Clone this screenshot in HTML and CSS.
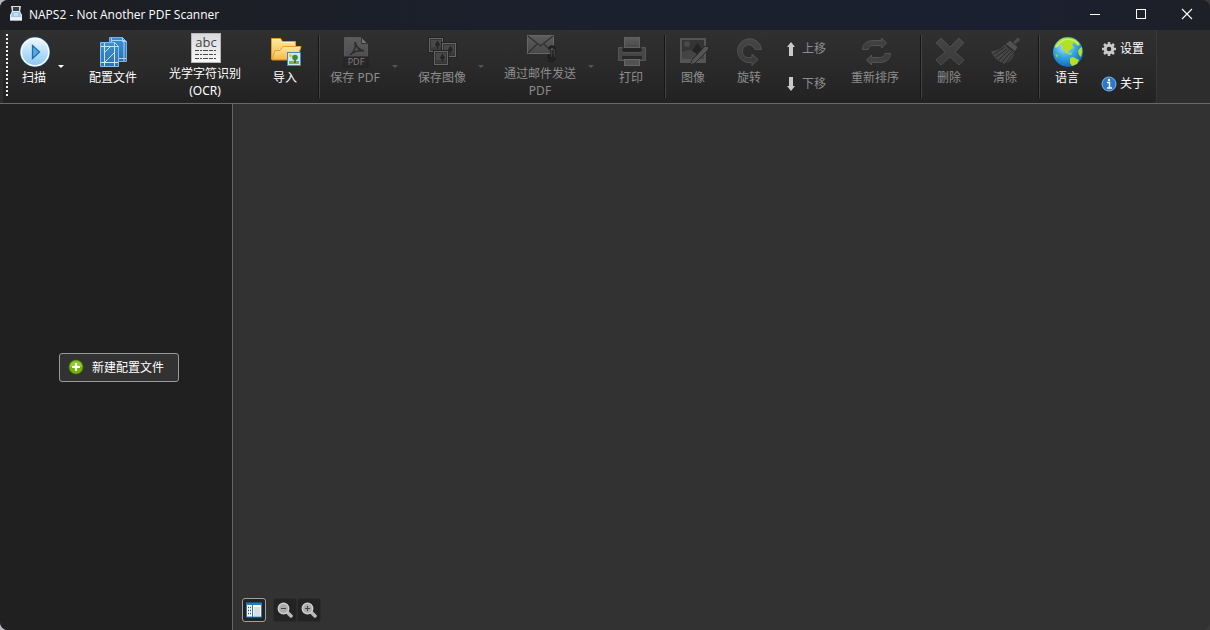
FILE: index.html
```html
<!DOCTYPE html>
<html lang="zh-CN">
<head>
<meta charset="utf-8">
<title>NAPS2 - Not Another PDF Scanner</title>
<link rel="stylesheet" href="styles.css">
</head>
<body>
<svg class="defs" width="0" height="0" aria-hidden="true">
  <defs>
    <linearGradient id="gray" x1="0" y1="0" x2="0" y2="1"><stop offset="0" stop-color="#5d5d5d"/><stop offset="1" stop-color="#484848"/></linearGradient>
    <linearGradient id="dim" x1="0" y1="0" x2="0" y2="1"><stop offset="0" stop-color="#454545"/><stop offset="1" stop-color="#3a3a3a"/></linearGradient>
    <linearGradient id="sky" x1="0" y1="0" x2="0" y2="1"><stop offset="0" stop-color="#eaf6fe"/><stop offset="1" stop-color="#8cc8f2"/></linearGradient>
    <linearGradient id="blue" x1="0" y1="0" x2="0" y2="1"><stop offset="0" stop-color="#3f8fd4"/><stop offset="1" stop-color="#2a72b8"/></linearGradient>
    <linearGradient id="folder" x1="0" y1="0" x2="0" y2="1"><stop offset="0" stop-color="#ffe9a0"/><stop offset="1" stop-color="#f5b947"/></linearGradient>
    <radialGradient id="sea" cx=".4" cy=".3" r=".75"><stop offset="0" stop-color="#b5ecfb"/><stop offset=".5" stop-color="#35a5e2"/><stop offset="1" stop-color="#0b62b4"/></radialGradient>
    <linearGradient id="paper" x1="0" y1="0" x2="0" y2="1"><stop offset="0" stop-color="#d9d9dc"/><stop offset="1" stop-color="#f8f8f8"/></linearGradient>
  </defs>
</svg>
<div class="window">
  <header class="titlebar">
    <svg class="app-icon" width="16" height="16" viewBox="0 0 16 16"><path d="M3 0h10l-1 6H4z" fill="#d9dde0"/><path d="M5 1h6v4H5z" fill="#3b3f46"/><path d="M4 5h8l2 4v5H2V9z" fill="#e4eaf0"/><path d="M4 6h8l1 5H3z" fill="#9cc8f2"/><path d="M6 7h4v3H6z" fill="#c2e0fa"/><path d="M2 12h12v3H2z" fill="#f1f1f1"/><path d="M2 14h12v1H2z" fill="#a9adb2"/></svg>
    <h1 class="title">NAPS2 - Not Another PDF Scanner</h1>
    <div class="captions">
      <button class="caption" aria-label="最小化"><svg width="12" height="12"><path d="M1 6.500h10" stroke="#fff"/></svg></button>
      <button class="caption" aria-label="最大化"><svg width="12" height="12"><rect x="1.500" y="1.500" width="9" height="9" fill="none" stroke="#fff"/></svg></button>
      <button class="caption" aria-label="关闭"><svg width="12" height="12"><path d="M1 1l10 10M11 1L1 11" stroke="#fff" stroke-width="1.100"/></svg></button>
    </div>
  </header>

  <nav class="toolbar" aria-label="工具栏">
    <div class="strip">
      <span class="grip"></span>
      <div class="group">
        <button class="tool scan"><svg width="32" height="32" viewBox="0 0 32 32"><circle cx="16" cy="16" r="15" fill="#2e87c8"/><circle cx="16" cy="16" r="14.500" fill="#fff"/><circle cx="16" cy="16" r="13" fill="url(#sky)"/><path d="M13.500 9.500v13l7-6.500z" fill="#5ba9e0" stroke="#1e6dae" stroke-width="1.300"/></svg><span>扫描</span></button>
        <button class="drop" aria-label="扫描选项"><svg width="10" height="4"><path d="M2 0h6L5 3z" fill="#fff"/></svg></button>
        <button class="tool profiles"><svg width="32" height="32" viewBox="0 0 32 32"><path d="M11.500 1.500h13l4 4v20h-17z" fill="url(#blue)" stroke="#6fb2e8"/><path d="M13 4.500h14M20 22.500h8M26 6v19M13.500 2v6M24.500 1.500v4h4" stroke="#a9d4f6" fill="none"/><path d="M2.500 6.500h14l4 4v20h-18z" fill="url(#blue)" stroke="#7fbef0"/><path d="M3 10.500h14M3 26.500h17M6.500 7v23M16.500 11v19M7 16l5-5M7 26l9-9" stroke="#c9e6fc" fill="none"/><path d="M16.500 6.500v4h4z" fill="#2d75b7" stroke="#b4dcfa"/></svg><span>配置文件</span></button>
        <button class="tool tall ocr"><svg width="32" height="32" viewBox="0 0 32 32"><rect x="1.500" y="1.500" width="29" height="29" fill="url(#paper)" stroke="#b8b8bb"/><text x="16" y="15" text-anchor="middle" class="icon-abc">abc</text><path d="M5 18.500h22M5 22.500h22M5 26.500h22" stroke="#4b4b4b" stroke-dasharray="4 1 2 1 5 1"/></svg><span>光学字符识别<br>(OCR)</span></button>
        <button class="tool import"><svg width="32" height="32" viewBox="0 0 32 32"><path d="M1.500 23.500V2.500h9l2 3h13v6" fill="url(#folder)" stroke="#df9c30"/><path d="M2 23.500l3-9h5l3-4h18l-4 13z" fill="url(#folder)" stroke="#e1a137"/><path d="M2.500 3.500h7.500l2 3h12" fill="none" stroke="#fff1bf"/><path d="M2 24.500h16" stroke="#82591c"/><rect x="17.500" y="16.500" width="13" height="13" fill="#c9ecfc" stroke="#4486bf"/><path d="M19 25h10v3H19z" fill="#76b83c"/><path d="M25 23v4" stroke="#6c4b1e" stroke-width="1.500"/><circle cx="25" cy="21.500" r="2.800" fill="#3c8a32"/><circle cx="20.500" cy="19.500" r="1.500" fill="#ffb52c"/></svg><span>导入</span></button>
      </div>
      <div class="group">
        <button class="tool save-pdf" disabled><svg width="32" height="32" viewBox="0 0 32 32"><path d="M4.500 1.500h17l6 6v22h-23z" fill="url(#gray)" stroke="#585858"/><path d="M21.500 1.500v6h6z" fill="#777" stroke="#343434"/><path d="M4 21h24v10H4z" fill="#282828" stroke="#202020"/><path d="M15 6c1 5 4 8 9 9-5-.500-10 0-14 4 4-3 6-8 5-13z" fill="none" stroke="#2c2c2c" stroke-width="1.500"/><text x="16" y="29" text-anchor="middle" class="icon-pdf">PDF</text></svg><span>保存 PDF</span></button>
        <button class="drop" disabled aria-label="保存 PDF 选项"><svg width="10" height="4"><path d="M2 0h6L5 3z" fill="#555"/></svg></button>
        <button class="tool save-image" disabled><svg width="32" height="32" viewBox="0 0 32 32"><g id="photo"><rect x="1" y="1" width="16" height="16" fill="#242424"/><rect x="2.500" y="2.500" width="13" height="13" fill="#333" stroke="#666"/><rect x="4" y="4" width="10" height="10" fill="#494949"/><path d="M4 11h10v3H4z" fill="#3c3c3c"/><path d="M10.500 13v-3" stroke="#242424"/><path d="M10.500 4.500l2.500 4-1 2H9l-1-2z" fill="#252525"/></g><use href="#photo" x="13" y="5"/><use href="#photo" x="5" y="13"/></svg><span>保存图像</span></button>
        <button class="drop" disabled aria-label="保存图像选项"><svg width="10" height="4"><path d="M2 0h6L5 3z" fill="#555"/></svg></button>
        <button class="tool tall mail" disabled><svg width="32" height="32" viewBox="0 0 32 32"><rect x="2.500" y="3.500" width="26" height="18" fill="url(#gray)" stroke="#666"/><path d="M3 4l12.500 10L28 4M3 21l9-9M28 21l-9-9" fill="none" stroke="#303030" stroke-width="1.300"/><path d="M26.500 18v7a1.500 1.500 0 0 1-3 0v-3M29.500 23v-6a2.500 2.500 0 0 0-5 0M29.500 22v4a3.500 3.500 0 0 1-6 2" fill="none" stroke="#202020" stroke-width="2.500"/><path d="M26.500 18v7M29.500 17v8" fill="none" stroke="#464646" stroke-width=".800"/></svg><span>通过邮件发送<br>PDF</span></button>
        <button class="drop" disabled aria-label="邮件选项"><svg width="10" height="4"><path d="M2 0h6L5 3z" fill="#555"/></svg></button>
        <button class="tool print" disabled><svg width="32" height="32" viewBox="0 0 32 32"><path d="M2.500 11.500h4v5h19v-5h4v13h-27z" fill="#464646" stroke="#555"/><rect x="8.500" y="1.500" width="15" height="10" fill="url(#gray)" stroke="#606060"/><rect x="6" y="12" width="20" height="4" rx="2" fill="#242424"/><path d="M6 21.500h20" stroke="#282828" stroke-width="3"/><rect x="8.500" y="23.500" width="15" height="6" fill="#525252" stroke="#666"/></svg><span>打印</span></button>
      </div>
      <div class="group">
        <button class="tool image" disabled><svg width="32" height="32" viewBox="0 0 32 32"><rect x="3" y="3" width="24" height="23" fill="#353535" stroke="#555" stroke-width="2"/><path d="M2 23h26v4H2z" fill="#555"/><circle cx="9" cy="8" r="3" fill="#4a4a4a"/><path d="M4 16q8-4 12 0t10 0v7H4z" fill="#444"/><path d="M19.500 23v-7" stroke="#242424" stroke-width="2.500"/><path d="M19.500 7l5 7c0 4-10 4-10 0z" fill="#242424"/><path d="M12 29l2-5L27 10l4 1-1 3-13 13z" fill="#555" stroke="#2a2a2a"/></svg><span>图像</span></button>
        <button class="tool rotate" disabled><svg width="32" height="32" viewBox="0 0 32 32"><path d="M27.500 13.500A12 12 0 1 0 18 26.500v3l6-6-6-5.500v3a6.500 6.500 0 1 1 3-7.500z" fill="url(#dim)" stroke="#525252"/></svg><span>旋转</span></button>
        <div class="stack move">
          <button class="line" disabled><svg width="16" height="16" viewBox="0 0 16 16"><path d="M8 1l4 5h-2v9H6V6H4z" fill="#c9c9c9"/></svg><span>上移</span></button>
          <button class="line" disabled><svg width="16" height="16" viewBox="0 0 16 16"><path d="M8 15l4-5h-2V1H6v9H4z" fill="#c9c9c9"/></svg><span>下移</span></button>
        </div>
        <button class="tool reorder" disabled><svg width="32" height="32" viewBox="0 0 32 32"><path id="half-turn" d="M2.500 13.500c0-6 5-9 11-9h8V2l5 5-5 5V9.500h-8c-3 0-5 1-5.500 4z" fill="url(#dim)" stroke="#535353"/><use href="#half-turn" transform="rotate(180 16.500 15.500)"/></svg><span>重新排序</span></button>
      </div>
      <div class="group">
        <button class="tool delete" disabled><svg width="32" height="32" viewBox="0 0 32 32"><path d="M7 2l9 9 9-9 5 5-9 9 9 8-5 5-9-8-9 8-5-5 9-8-9-9z" fill="url(#dim)" stroke="#4c4c4c"/></svg><span>删除</span></button>
        <button class="tool clear" disabled><svg width="32" height="32" viewBox="0 0 32 32"><path d="M1 15c6 0 10-2 14-7l10 9c-2 5-6 9-10 11-6-2-12-7-14-13z" fill="#474747"/><path d="M4 18l11-7M6 21l11-8M9 24l10-10M12 26l9-10M15 28l8-10" stroke="#272727"/><path d="M15 8l5-4 8 7-4 7z" fill="#515151" stroke="#2a2a2a"/><path d="M16 9l9 7" stroke="#2a2a2a" stroke-width="1.500"/><path d="M24 7l5-4M28 2v3" stroke="#4b4b4b" stroke-width="3"/></svg><span>清除</span></button>
      </div>
      <div class="group">
        <button class="tool language"><svg width="32" height="32" viewBox="0 0 32 32"><circle cx="16" cy="16" r="15" fill="url(#sea)"/><path d="M3 10Q6 4 12 2l3 1-3 3-3 1-3 4-3 1zM10 6l5-4 6 1 1 3-2 3 2 3-3 1-3 2 1 2h3l-1 2-5-2-4-5zM19 2q6 1 9 7l-2 1-4-3zM28 12l2-1q1 5-1 10l-2-2-1-4zM18 22l3-1 6 3-2 4-5 2-2-3z" fill="#b5df22"/><path d="M3 18l3 1-1 3z" fill="#9fd41e"/><path d="M4 11Q14-3 27 8" fill="none" stroke="#e0fa94" stroke-width="1.500" opacity=".6"/></svg><span>语言</span></button>
        <div class="stack options">
          <button class="line"><svg width="16" height="16" viewBox="0 0 16 16"><circle cx="8" cy="8" r="3.800" fill="none" stroke="#c9c9c9" stroke-width="3"/><path d="M8 1v3M8 12v3M1 8h3M12 8h3M3 3l2 2M11 11l2 2M13 3l-2 2M5 11l-2 2" stroke="#c9c9c9" stroke-width="2.500"/></svg><span>设置</span></button>
          <button class="line"><svg width="16" height="16" viewBox="0 0 16 16"><circle cx="8" cy="8" r="7" fill="#2b79c8" stroke="#82b9ea"/><path d="M6 6.500h2.500v5M6 12h5" fill="none" stroke="#fff" stroke-width="1.500"/><circle cx="8" cy="4" r="1.200" fill="#fff"/></svg><span>关于</span></button>
        </div>
      </div>
    </div>
  </nav>

  <div class="body">
    <aside class="sidebar">
      <button class="new-profile"><svg width="16" height="16" viewBox="0 0 16 16"><circle cx="8" cy="8" r="7" fill="#70b30b" stroke="#4c8500" stroke-width=".500"/><path d="M2 8a6 6 0 0 1 12 0z" fill="#92cc2c"/><path d="M8 4v8M4 8h8" stroke="#fff" stroke-width="2.200"/></svg><span>新建配置文件</span></button>
    </aside>
    <main class="content">
      <div class="viewbar">
        <button class="view active" aria-label="切换侧边栏"><svg width="16" height="16" viewBox="0 0 16 16"><rect x=".500" y="1" width="15" height="14" fill="#fff" stroke="#1c83c5"/><path d="M0 1h16v2H0z" fill="#1683c8"/><path d="M2 5.500h3M2 8.500h3M2 11.500h3" stroke="#364f65" stroke-width="1.500" stroke-dasharray="1 1 1"/><path d="M6.500 3v12" stroke="#1683c8"/><path d="M8 5h6v9H8z" fill="#dededf"/></svg></button>
        <div class="zoom">
          <button class="view" aria-label="缩小"><svg width="16" height="16" viewBox="0 0 16 16"><path d="M11 11l3 3" stroke="#bababa" stroke-width="3.500" stroke-linecap="round"/><circle cx="6.500" cy="6.500" r="5.200" fill="#aaa" stroke="#cfcfcf" stroke-width="1.500"/><path d="M4 6.500h5" stroke="#444"/></svg></button>
          <button class="view" aria-label="放大"><svg width="16" height="16" viewBox="0 0 16 16"><path d="M11 11l3 3" stroke="#bababa" stroke-width="3.500" stroke-linecap="round"/><circle cx="6.500" cy="6.500" r="5.200" fill="#aaa" stroke="#cfcfcf" stroke-width="1.500"/><path d="M4 6.500h5M6.500 4v5" stroke="#444"/></svg></button>
        </div>
      </div>
    </main>
  </div>
</div>
</body>
</html>
```
FILE: styles.css
```css
* { box-sizing: border-box; }
body {
  margin: 0;
  background: linear-gradient(90deg, #b8bcc2, #3a3a3a 40px);
  color: #fff;
  font: 12px/17px "Noto Sans", "Noto Sans CJK SC", sans-serif;
}
button {
  margin: 0;
  padding: 0;
  border: 0;
  background: none;
  color: inherit;
  font: inherit;
}
svg { display: block; flex: none; }
.defs { position: absolute; }
.window {
  display: flex;
  flex-direction: column;
  min-height: 100vh;
  border-radius: 8px;
  overflow: hidden;
  background: #323232;
}

.titlebar {
  display: flex;
  align-items: center;
  height: 30px;
  padding-left: 8px;
  background: linear-gradient(90deg, #1d1e22, #1b202e 50%, #1b2030 85%, #1e2027);
}
.app-icon { margin-bottom: 2px; }
.title {
  margin: 0 auto 2px 5px;
  font-family: "Open Sans", sans-serif;
  font-size: 12px;
  font-weight: 400;
}
.captions { display: flex; }
.caption {
  display: flex;
  align-items: center;
  justify-content: center;
  width: 46px;
  height: 30px;
  padding-bottom: 2px;
}

.toolbar {
  height: 74px;
  padding-left: 3px;
  background: #2d2d2d;
  border-bottom: 1px solid #696969;
}
.strip {
  display: flex;
  width: max-content;
  height: 73px;
  border-right: 1px solid #383838;
  border-radius: 0 0 4px 0;
  background: linear-gradient(#303030, #2a2a2a 50%, #222);
}
.grip {
  width: 2px;
  margin: 4px 4px 6px 3px;
  background: repeating-linear-gradient(#f0f0f0 0 2px, transparent 2px 4px);
}
.group { display: flex; }
.group + .group::before {
  content: "";
  width: 2px;
  margin: 5px 0;
  background: linear-gradient(90deg, #151515 50%, #444 50%);
}
.tool {
  display: flex;
  flex-direction: column;
  align-items: center;
  padding-top: 6px;
  gap: 1px;
  white-space: nowrap;
}
.tool svg { margin-left: 2px; }
.tall { padding-top: 2px; }
.tool:disabled, .line:disabled { color: #8d8d8d; }
.drop {
  width: 12px;
  height: 73px;
}
.scan { width: 44px; }
.profiles { width: 90px; }
.ocr { width: 94px; }
.import, .print { width: 66px; }
.save-pdf { width: 70px; }
.save-image { width: 68px; margin-left: 6px; }
.mail { width: 92px; margin-left: 6px; }
.image, .delete, .language { width: 54px; }
.rotate { width: 58px; }
.clear { width: 58px; margin-right: 4px; }
.reorder { width: 90px; }
.stack {
  display: flex;
  flex-direction: column;
  gap: 18px;
  padding: 10px 0 0 5px;
}
.move { width: 52px; }
.options { width: 62px; padding-left: 7px; }
.line {
  display: flex;
  align-items: center;
  gap: 3px;
  white-space: nowrap;
}
.icon-abc {
  font: 13px "Open Sans", sans-serif;
  fill: #444;
}
.icon-pdf {
  font: 9px "Open Sans", sans-serif;
  fill: #808080;
}

.body { display: flex; flex: 1; }
.sidebar {
  display: flex;
  align-items: center;
  justify-content: center;
  width: 233px;
  padding-left: 6px;
  background: #202020;
  border-right: 1px solid #666;
}
.new-profile {
  display: flex;
  align-items: center;
  gap: 8px;
  height: 29px;
  padding: 0 14px 0 8px;
  border: 1px solid #999;
  border-radius: 3px;
  background: #323232;
}
.content {
  display: flex;
  flex: 1;
  align-items: flex-end;
  padding: 8px;
  background: #323232;
}
.viewbar { display: flex; gap: 7px; padding-left: 1px; }
.view {
  display: flex;
  align-items: center;
  justify-content: center;
  width: 24px;
  height: 24px;
  border: 1px solid #2c2c2c;
  border-radius: 3px;
  background: #232323;
}
.active { border-color: #a0a0a0; }
.zoom { display: flex; }
```
